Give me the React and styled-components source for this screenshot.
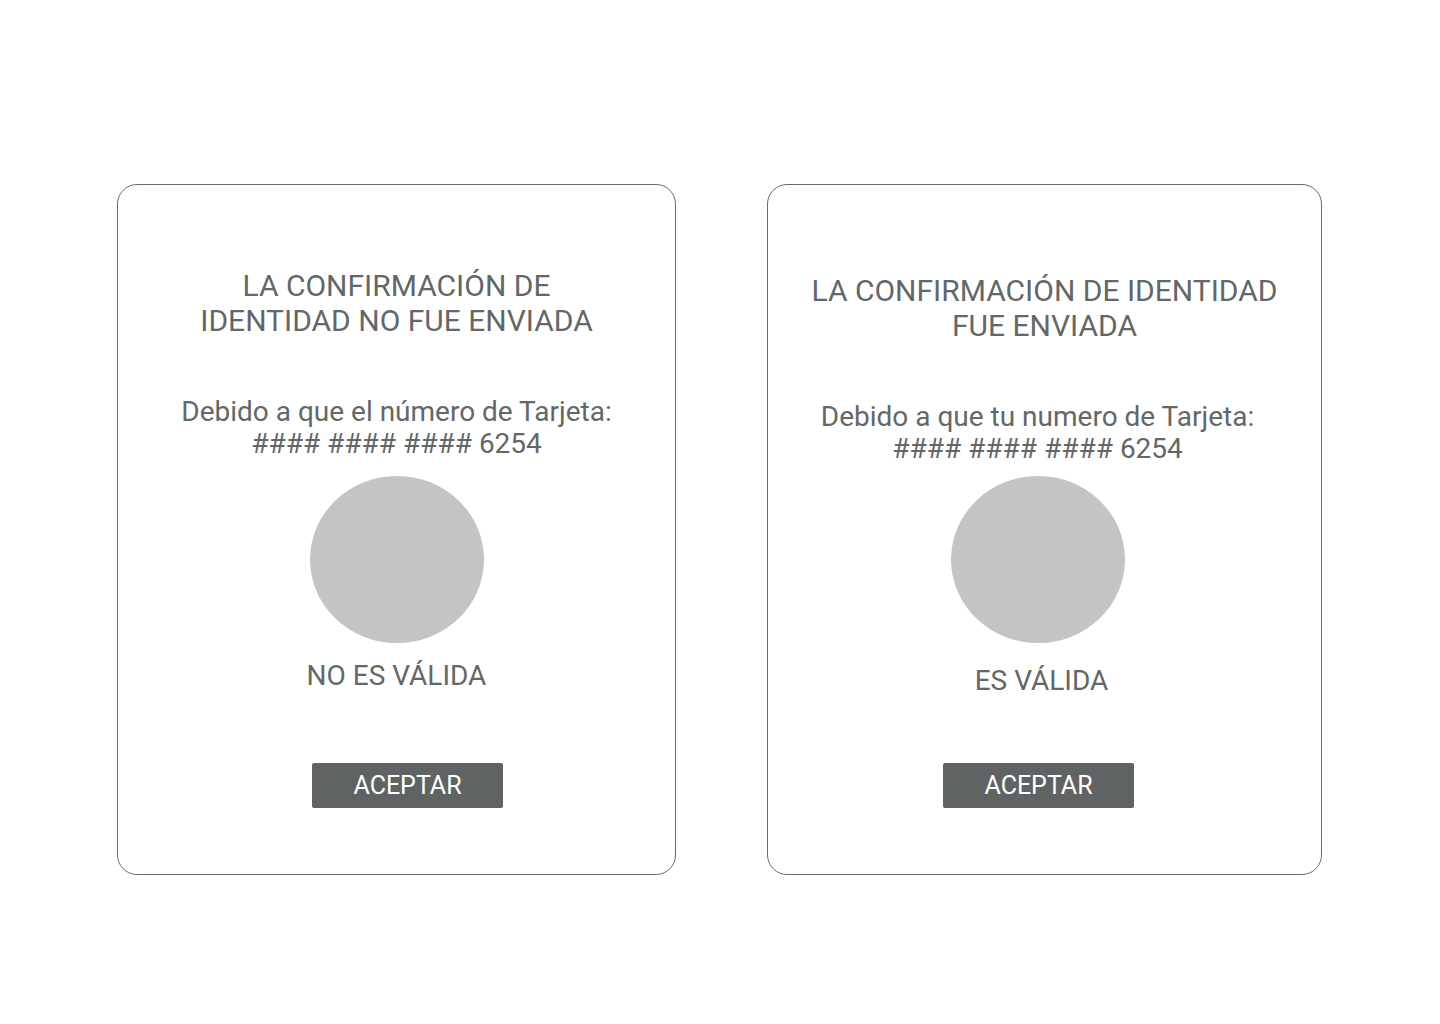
import React from 'react';
import styled, { createGlobalStyle } from 'styled-components';

const GlobalStyle = createGlobalStyle`
  body {
    margin: 0;
    background: #ffffff;
    font-family: Roboto, "Liberation Sans", sans-serif;
  }
`;

const Page = styled.div`
  width: 1440px;
  height: 1024px;
  display: flex;
  align-items: flex-start;
  padding: 184px 0 0 117px;
  box-sizing: border-box;
  gap: 91px;
`;

const Card = styled.div`
  width: ${(p) => p.$width}px;
  height: 691px;
  box-sizing: border-box;
  border: 1px solid #6b6b6b;
  border-radius: 20px;
  display: flex;
  flex-direction: column;
  align-items: center;
  padding-top: ${(p) => p.$top}px;
  color: #646767;
`;

const Title = styled.h2`
  margin: 0;
  font-size: 30px;
  font-weight: 400;
  line-height: 35px;
  text-align: center;
  white-space: nowrap;
  transform: translateX(${(p) => p.$shift || 0}px);
`;

const Body = styled.p`
  margin: ${(p) => p.$gap}px 0 0;
  font-size: 28px;
  line-height: 32px;
  text-align: center;
  white-space: nowrap;
  transform: translateX(${(p) => p.$shift || 0}px);
`;

const Circle = styled.div`
  margin-top: ${(p) => p.$gap}px;
  width: 174px;
  height: 167px;
  border-radius: 50%;
  background: #c4c4c4;
  transform: translateX(${(p) => p.$shift || 0}px);
`;

const Status = styled.div`
  margin-top: ${(p) => p.$gap}px;
  font-size: 28px;
  line-height: 32px;
  transform: translateX(${(p) => p.$shift || 0}px);
`;

const Button = styled.button`
  margin-top: ${(p) => p.$gap}px;
  width: 191px;
  height: 45px;
  border: none;
  border-radius: 2px;
  background: #5f6363;
  color: #ffffff;
  font-family: Roboto, "Liberation Sans", sans-serif;
  font-size: 25px;
  padding: 0;
  cursor: pointer;
  transform: translateX(${(p) => p.$shift || 0}px);
`;

export default function App() {
  return (
    <>
      <GlobalStyle />
      <Page>
        <Card $width={559} $top={83}>
          <Title>
            LA CONFIRMACIÓN DE
            <br />
            IDENTIDAD NO FUE ENVIADA
          </Title>
          <Body $gap={58}>
            Debido a que el número de Tarjeta:
            <br />
            #### #### #### 6254
          </Body>
          <Circle $gap={16} />
          <Status $gap={17}>NO ES VÁLIDA</Status>
          <Button $gap={71} $shift={11}>ACEPTAR</Button>
        </Card>
        <Card $width={555} $top={88}>
          <Title>
            LA CONFIRMACIÓN DE IDENTIDAD
            <br />
            FUE ENVIADA
          </Title>
          <Body $gap={58} $shift={-7}>
            Debido a que tu numero de Tarjeta:
            <br />
            #### #### #### 6254
          </Body>
          <Circle $gap={11} $shift={-7} />
          <Status $gap={22} $shift={-3}>ES VÁLIDA</Status>
          <Button $gap={66} $shift={-6}>ACEPTAR</Button>
        </Card>
      </Page>
    </>
  );
}
